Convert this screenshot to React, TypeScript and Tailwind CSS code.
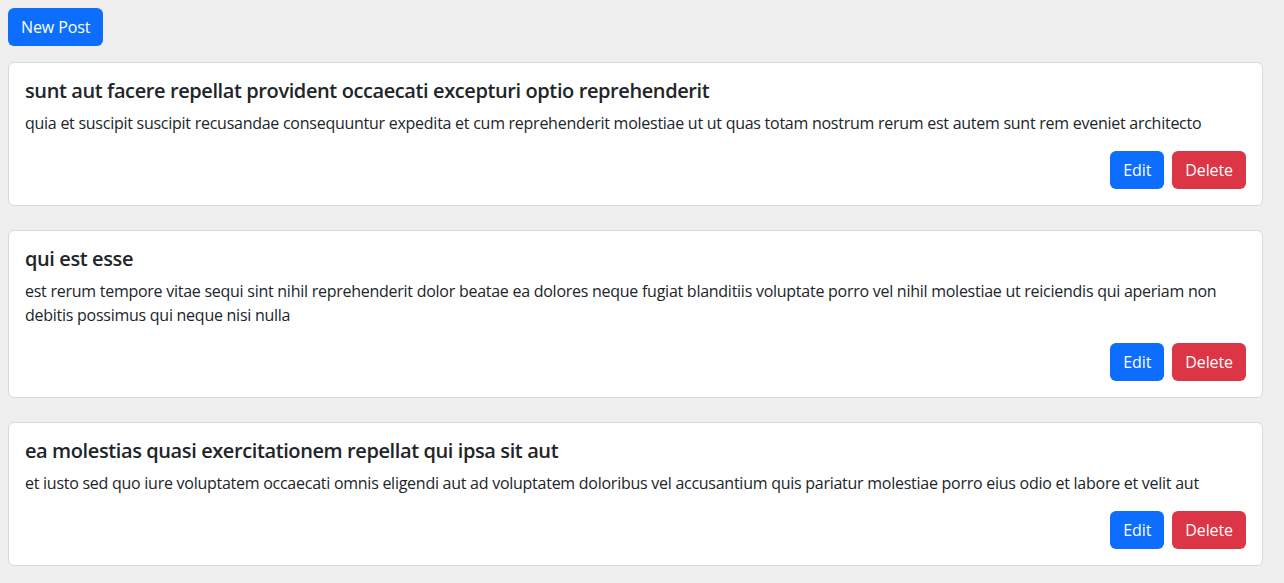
import React from "react"

type Post = { id: number; title: string; body: string }

const posts: Post[] = [
	{
		id: 1,
		title: "sunt aut facere repellat provident occaecati excepturi optio reprehenderit",
		body: "quia et suscipit suscipit recusandae consequuntur expedita et cum reprehenderit molestiae ut ut quas totam nostrum rerum est autem sunt rem eveniet architecto",
	},
	{
		id: 2,
		title: "qui est esse",
		body: "est rerum tempore vitae sequi sint nihil reprehenderit dolor beatae ea dolores neque fugiat blanditiis voluptate porro vel nihil molestiae ut reiciendis qui aperiam non debitis possimus qui neque nisi nulla",
	},
	{
		id: 3,
		title: "ea molestias quasi exercitationem repellat qui ipsa sit aut",
		body: "et iusto sed quo iure voluptatem occaecati omnis eligendi aut ad voluptatem doloribus vel accusantium quis pariatur molestiae porro eius odio et labore et velit aut",
	},
]

const btn = "text-white rounded-[6px] px-[13px] py-[7px] leading-[24px] text-[16px] tracking-[-0.1px]"

const PostCard = ({ post }: { post: Post }) => {
	return (
		<div className="bg-white border border-[#d9d9d9] rounded-[6px] p-4 mb-6 last:mb-0">
			<h5 className="text-[20px] leading-[24px] font-semibold tracking-[-0.4px] mb-2 text-[#212529]">{post.title}</h5>
			<p className="text-[16px] leading-[24px] tracking-[-0.26px] mb-4 text-[#212529]">{post.body}</p>
			<div className="flex justify-end gap-2">
				<button className={`bg-[#0d6efd] ${btn}`}>Edit</button>
				<button className={`bg-[#dc3545] ${btn}`}>Delete</button>
			</div>
		</div>
	)
}

export default function App() {
	return (
		<div className="min-h-[583px] bg-[#efefef] p-2 font-['Open_Sans',sans-serif]">
			<button className={`bg-[#0d6efd] ${btn} mb-4`}>New Post</button>
			<div className="w-[1255px]">
				{posts.map((post) => (
					<PostCard key={post.id} post={post} />
				))}
			</div>
		</div>
	)
}
